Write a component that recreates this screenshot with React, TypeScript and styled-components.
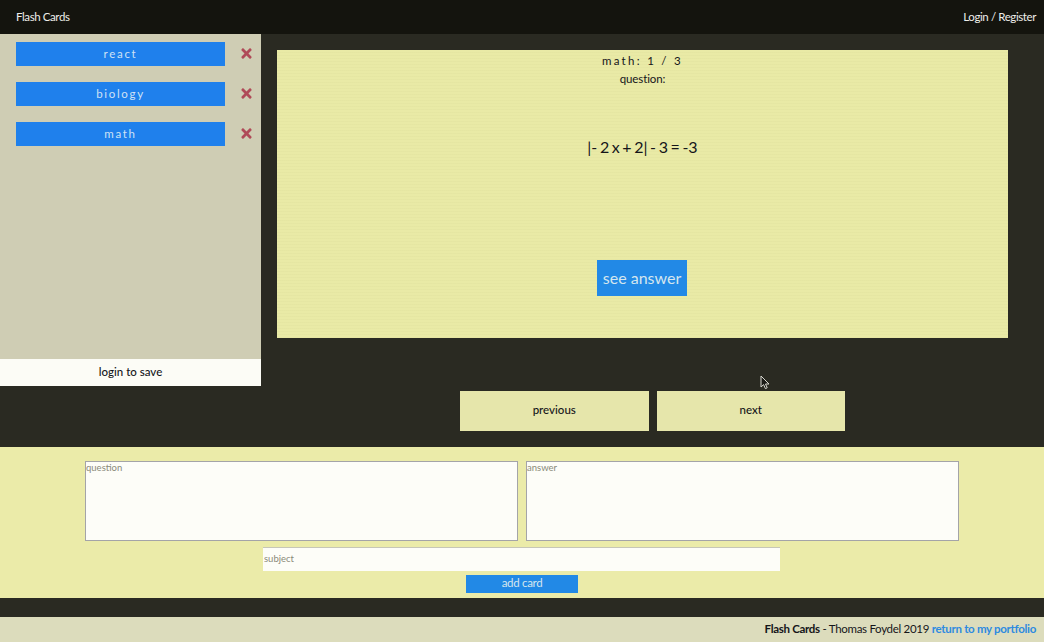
import { useState } from 'react'
import styled, { createGlobalStyle } from 'styled-components'
import { FaTimes } from 'react-icons/fa'

const GlobalStyle = createGlobalStyle`
    html, body {
        margin: 0;
        padding: 0;
        background: #2a2a22;
        font-family: Lato, "Noto Sans", sans-serif;
    }
    * {
        box-sizing: border-box;
    }
`

const Page = styled.div`
    position: relative;
    width: 1044px;
    height: 642px;
    overflow: hidden;
    display: flex;
    flex-direction: column;
    background: #2a2a22;
`

const Header = styled.header`
    height: 34px;
    flex: none;
    display: flex;
    justify-content: space-between;
    align-items: center;
    padding: 0 8px 2px 16px;
    background: #14140e;
    color: #eeeeea;
    font-size: 11.5px;
    letter-spacing: -0.4px;
`

const Main = styled.main`
    height: 413px;
    flex: none;
    display: flex;
    align-items: flex-start;
`

const Sidebar = styled.aside`
    width: 261px;
    height: 352px;
    flex: none;
    display: flex;
    flex-direction: column;
    background: #cfcdb4;
`

const SubjectList = styled.ul`
    flex: 1;
    list-style: none;
    margin: 0;
    padding: 8px 8px 0 16px;
    display: flex;
    flex-direction: column;
    gap: 16px;
`

const SubjectRow = styled.li`
    display: flex;
    align-items: center;
    justify-content: space-between;
`

const SubjectButton = styled.button`
    width: 209px;
    height: 24px;
    padding: 0 0 2px;
    border: 0;
    background: #1f80ec;
    color: #cfe2f5;
    font-family: inherit;
    font-size: 11.5px;
    letter-spacing: 1.7px;
`

const RemoveIcon = styled(FaTimes)`
    color: #b04a58;
    font-size: 15px;
    margin: -2px -1px 0 0;
`

const SaveNote = styled.div`
    height: 27px;
    flex: none;
    display: flex;
    align-items: center;
    justify-content: center;
    padding-bottom: 2px;
    background: #fcfcf6;
    color: #15151a;
    font-size: 11.5px;
    font-weight: 500;
`

const Content = styled.section`
    flex: 1;
    padding: 16px 36px 0 16px;
`

const Card = styled.div`
    height: 288px;
    display: flex;
    flex-direction: column;
    align-items: center;
    background-color: #e9eaa6;
    background-image: repeating-linear-gradient(0deg, rgba(120, 120, 60, 0.03) 0 1px, transparent 1px 3px);
    color: #15151a;
`

const CardTitle = styled.div`
    margin-top: 3px;
    font-size: 11.5px;
    line-height: 16px;
    letter-spacing: 2.3px;
`

const CardLabel = styled.div`
    margin-top: 3px;
    font-size: 11.5px;
    line-height: 14px;
    letter-spacing: -0.1px;
`

const CardText = styled.div`
    margin-top: 49px;
    font-size: 16px;
    line-height: 24px;
    white-space: pre;
    word-spacing: -1.5px;
`

const SeeAnswer = styled.button`
    width: 90px;
    height: 36px;
    margin: 101px 1px 0 0;
    padding: 0 0 2px;
    border: 0;
    background: #2289e6;
    color: #d5e6ee;
    font-family: inherit;
    font-size: 16px;
`

const NavRow = styled.div`
    display: flex;
    justify-content: center;
    gap: 8px;
    margin-top: 53px;
    padding-left: 20px;
`

const NavButton = styled.button`
    width: 188.5px;
    height: 40px;
    padding: 0 0 3px;
    border: 0;
    background: #e6e6ab;
    color: #15151a;
    font-family: inherit;
    font-size: 11.5px;
    font-weight: 500;
`

const FormPanel = styled.form`
    height: 151px;
    flex: none;
    display: flex;
    flex-direction: column;
    align-items: center;
    padding-top: 14px;
    background: #ebeba9;
`

const AreaRow = styled.div`
    display: flex;
    gap: 8px;
`

const Area = styled.textarea`
    width: 433px;
    height: 80px;
    margin: 0;
    padding: 0;
    border: 1px solid #a4a4a8;
    border-radius: 0;
    background: #fdfdf8;
    font-family: inherit;
    font-size: 9.5px;
    resize: none;
    &::placeholder {
        color: #8a8a78;
    }
`

const SubjectInput = styled.input`
    width: 517px;
    height: 24px;
    margin: 6px 0 0 -1px;
    padding: 0 1px 2px;
    border: 0;
    border-top: 1px solid #c6c6b8;
    background: #fdfdf8;
    font-family: inherit;
    font-size: 9.5px;
    &::placeholder {
        color: #8a8a78;
    }
`

const AddButton = styled.button`
    width: 112px;
    height: 18px;
    margin-top: 4px;
    padding: 0 0 3px;
    border: 0;
    background: #2289e6;
    color: #d5e6ee;
    font-family: inherit;
    font-size: 11.5px;
    letter-spacing: -0.3px;
`

const Gap = styled.div`
    height: 19px;
    flex: none;
`

const Footer = styled.footer`
    height: 25px;
    flex: none;
    display: flex;
    align-items: center;
    justify-content: flex-end;
    padding: 0 8px 2px 0;
    background: #dcdcbc;
    color: #15151a;
    font-size: 11.5px;
    letter-spacing: -0.3px;
    white-space: pre;
`

const Strong = styled.strong`
    font-weight: 700;
`

const PortfolioLink = styled.a`
    color: #2d8ae0;
    font-weight: 700;
    text-decoration: none;
`

const Cursor = styled.svg`
    position: absolute;
    left: 760px;
    top: 375px;
`

const subjects = ['react', 'biology', 'math']

function App() {
    const [current] = useState('math')

    return (
        <Page>
            <GlobalStyle />
            <Header>
                <span>Flash Cards</span>
                <span>Login / Register</span>
            </Header>
            <Main>
                <Sidebar>
                    <SubjectList>
                        {subjects.map((subject) => (
                            <SubjectRow key={subject}>
                                <SubjectButton>{subject}</SubjectButton>
                                <RemoveIcon />
                            </SubjectRow>
                        ))}
                    </SubjectList>
                    <SaveNote>login to save</SaveNote>
                </Sidebar>
                <Content>
                    <Card>
                        <CardTitle>{current}: 1 / 3</CardTitle>
                        <CardLabel>question:</CardLabel>
                        <CardText>|- 2 x + 2| - 3 = -3</CardText>
                        <SeeAnswer>see answer</SeeAnswer>
                    </Card>
                    <NavRow>
                        <NavButton>previous</NavButton>
                        <NavButton>next</NavButton>
                    </NavRow>
                </Content>
            </Main>
            <FormPanel>
                <AreaRow>
                    <Area placeholder="question" />
                    <Area placeholder="answer" />
                </AreaRow>
                <SubjectInput placeholder="subject" />
                <AddButton type="button">add card</AddButton>
            </FormPanel>
            <Gap />
            <Footer>
                <Strong>Flash Cards</Strong> - Thomas Foydel 2019 <PortfolioLink href="#">return to my portfolio</PortfolioLink>
            </Footer>
            <Cursor width="11" height="15" viewBox="0 0 11 15">
                <path d="M1 1 L1 12 L3.6 9.6 L5.4 13.6 L7.2 12.8 L5.5 9 L9 9 Z" fill="#1a1a16" stroke="#d8d8d0" strokeWidth="1" />
            </Cursor>
        </Page>
    )
}

export default App
